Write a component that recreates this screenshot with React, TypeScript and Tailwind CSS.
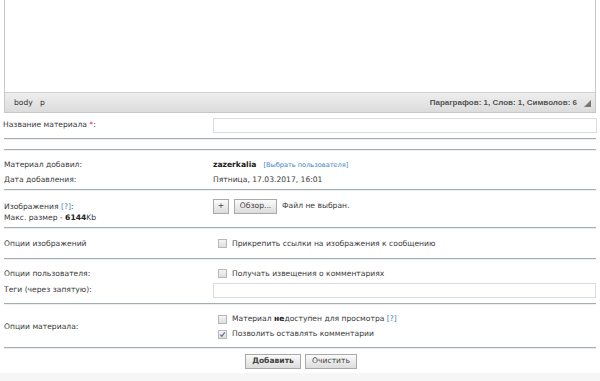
import React from 'react';

const Check: React.FC<{ checked?: boolean }> = ({ checked }) => (
  <span className="inline-flex h-[9px] w-[9px] items-center justify-center border border-[#b8b8b8] bg-gradient-to-b from-[#f4f4f4] to-[#dedede]">
    {checked && (
      <svg width="7" height="7" viewBox="0 0 8 8">
        <path d="M1.5 4.2 L3.2 6 L6.6 1.5" fill="none" stroke="#5a6a8a" strokeWidth="1.3" />
      </svg>
    )}
  </span>
);

const Btn: React.FC<{ children: React.ReactNode; bold?: boolean; w: string }> = ({ children, bold, w }) => (
  <span
    className={`inline-flex h-[15px] items-center justify-center border border-[#a9a9a9] bg-gradient-to-b from-[#fbfbfb] to-[#dcdcdc] text-[#444] ${w} ${bold ? 'font-bold text-[#222]' : ''}`}
  >
    {children}
  </span>
);

const Line: React.FC = () => <div className="mx-[4px] h-[2px] border-t border-[#a3abb3] bg-[#eef0f2]" />;

const App: React.FC = () => {
  return (
    <div
      className="h-[381px] w-[600px] overflow-hidden bg-white text-[7.6px] leading-[10px] text-[#3a3a3a]"
      style={{ fontFamily: '"DejaVu Sans", Verdana, sans-serif' }}
    >
      {/* editor */}
      <div className="mx-[4px] flex h-[113px] flex-col border-x border-b border-[#c8c8c8]">
        <div className="flex-1 bg-white" />
        <div className="flex h-[20px] items-center justify-between border-t border-[#d0d0d0] bg-gradient-to-b from-[#eeeeee] to-[#dcdcdc] pl-[9px] pr-[4px]">
          <span className="pt-[1px] text-[#333]">body&nbsp;&nbsp; p</span>
          <span className="flex items-center gap-[7px] pt-[1px]">
            <span className="font-bold text-[#555]" style={{ fontFamily: '"Liberation Sans", Arial, sans-serif', fontSize: 8 }}>
              Параграфов: 1, Слов: 1, Символов: 6
            </span>
            <svg width="7" height="7" viewBox="0 0 8 8">
              <path d="M8 0 L8 8 L0 8 Z" fill="#777" />
            </svg>
          </span>
        </div>
      </div>

      <div className="flex h-[25px] items-center px-[3px]">
        <div className="w-[210px] shrink-0 -mt-[2px]">
          Название материала <span className="text-[#e33]">*</span>:
        </div>
        <div className="h-[15px] flex-1 border border-[#dcdcdc] bg-white" />
      </div>
      <Line />
      <div className="h-[9px]" />
      <Line />

      <div className="flex h-[38px] flex-col justify-center gap-[5px] px-[4px] pt-[4px]">
        <div className="flex items-center">
          <div className="w-[209px] shrink-0">Материал добавил:</div>
          <div className="flex items-center gap-[7px]">
            <b className="text-[#222]">zazerkalia</b>
            <span className="text-[6.6px] text-[#3d84c4]">[Выбрать пользователя]</span>
          </div>
        </div>
        <div className="flex">
          <div className="w-[209px] shrink-0">Дата добавления:</div>
          <div>Пятница, 17.03.2017, 16:01</div>
        </div>
      </div>
      <Line />

      <div className="flex h-[36px] items-center px-[4px]">
        <div className="w-[209px] shrink-0 leading-[11px] pt-[6px]">
          <div>
            Изображения <span className="text-[#3d84c4]">[?]</span>:
          </div>
          <div>
            Макс. размер - <b className="text-[#222]">6144</b>Kb
          </div>
        </div>
        <div className="-mt-[6px] flex items-center gap-[5px]">
          <Btn w="w-[16px]">+</Btn>
          <Btn w="w-[43px]">Обзор...</Btn>
          <span>Файл не выбран.</span>
        </div>
      </div>
      <Line />

      <div className="flex h-[29px] items-center px-[4px]">
        <div className="w-[209px] shrink-0">Опции изображений</div>
        <div className="flex items-center gap-[5px] pl-[5px]">
          <Check />
          <span>Прикрепить ссылки на изображения к сообщению</span>
        </div>
      </div>
      <Line />

      <div className="flex h-[43px] flex-col justify-center gap-[4px] px-[4px] pt-[3px]">
        <div className="flex items-center">
          <div className="w-[209px] shrink-0">Опции пользователя:</div>
          <div className="flex items-center gap-[5px] pl-[5px]">
            <Check />
            <span>Получать извещения о комментариях</span>
          </div>
        </div>
        <div className="flex items-center">
          <div className="w-[209px] shrink-0">Теги (через запятую):</div>
          <div className="h-[15px] flex-1 border border-[#dcdcdc] bg-white" />
        </div>
      </div>
      <Line />

      <div className="flex h-[42px] items-center px-[4px] pt-[1px]">
        <div className="w-[209px] shrink-0">Опции материала:</div>
        <div className="flex flex-col gap-[5px] pl-[5px]">
          <div className="flex items-center gap-[5px]">
            <Check />
            <span>
              Материал <b className="text-[#222]">не</b>доступен для просмотра <span className="text-[#3d84c4]">[?]</span>
            </span>
          </div>
          <div className="flex items-center gap-[5px]">
            <Check checked />
            <span>Позволить оставлять комментарии</span>
          </div>
        </div>
      </div>
      <Line />

      <div className="flex h-[24px] items-center justify-center gap-[4px] pl-[2px]">
        <Btn w="w-[56px]" bold>
          Добавить
        </Btn>
        <Btn w="w-[52px]">Очистить</Btn>
      </div>
      <div className="h-[8px] bg-[#f6f6f6]" />
    </div>
  );
};

export default App;
